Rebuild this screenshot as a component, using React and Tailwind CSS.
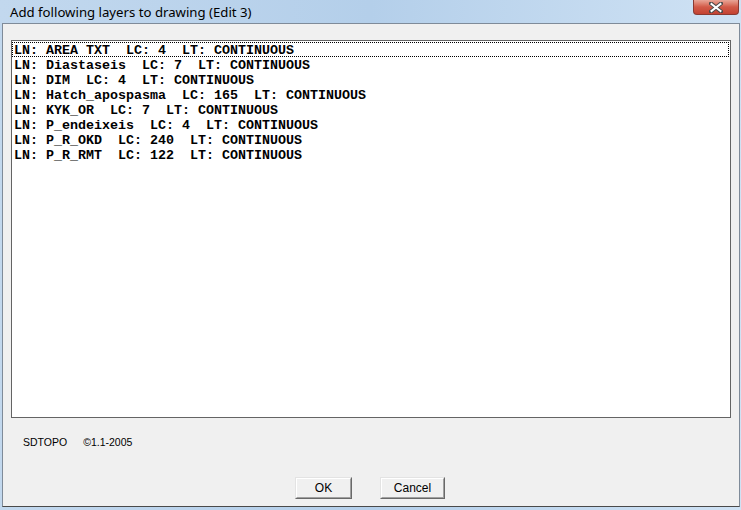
import React from "react";

const items = [
  "LN: AREA TXT  LC: 4  LT: CONTINUOUS",
  "LN: Diastaseis  LC: 7  LT: CONTINUOUS",
  "LN: DIM  LC: 4  LT: CONTINUOUS",
  "LN: Hatch_apospasma  LC: 165  LT: CONTINUOUS",
  "LN: KYK_OR  LC: 7  LT: CONTINUOUS",
  "LN: P_endeixeis  LC: 4  LT: CONTINUOUS",
  "LN: P_R_OKD  LC: 240  LT: CONTINUOUS",
  "LN: P_R_RMT  LC: 122  LT: CONTINUOUS",
];

function Btn({ children, w }) {
  return (
    <div className={`${w} h-[22px] border border-t-[#e3e3e3] border-l-[#e3e3e3] border-r-[#696969] border-b-[#696969] bg-[#f0f0f0] flex`}>
      <div className="flex-1 border border-t-white border-l-white border-r-[#a0a0a0] border-b-[#a0a0a0] flex items-center justify-center text-[12px] text-black" style={{ fontFamily: '"Liberation Sans", Arial, sans-serif' }}>
        {children}
      </div>
    </div>
  );
}

export default function App() {
  return (
    <div className="w-[741px] h-[510px] overflow-hidden flex flex-col bg-gradient-to-r from-[#c2d8ee] via-[#b4cfea] to-[#cfe2f4]">
      <div className="h-[23px] flex items-start justify-between shrink-0">
        <div className="pl-[10px] pt-[3px] text-[13.2px] leading-[18px] text-black" style={{ fontFamily: '"Noto Sans", "Open Sans", sans-serif' }}>
          Add following layers to drawing (Edit 3)
        </div>
        <div className="mr-[2px] w-[46px] h-[15px] rounded-b-[4px] border border-t-0 border-[#8a3a32] bg-gradient-to-b from-[#e8a597] via-[#d25a48] to-[#c34232] flex items-center justify-center">
          <svg width="14" height="11" viewBox="0 0 14 11">
            <path d="M2 1.5 L12 9.5 M12 1.5 L2 9.5" stroke="#4a4a4a" strokeWidth="4" strokeLinecap="square" />
            <path d="M2.5 2 L11.5 9 M11.5 2 L2.5 9" stroke="#ffffff" strokeWidth="2" strokeLinecap="square" />
          </svg>
        </div>
      </div>
      <div className="flex-1 flex px-[2px] pb-[3px] bg-transparent">
        <div className="flex-1 flex flex-col bg-[#f0f0f0] border border-[#7f8b99] border-b-[#4a4a4a]">
          <div className="mx-[8px] mt-[16px] h-[378px] w-[720px] bg-white border border-[#646464] pt-[1px] pl-0 pr-[1px]">
            {items.map((t, i) => (
              <div
                key={i}
                className={`h-[15px] leading-[15px] pl-[1px] text-[13.33px] font-bold text-black whitespace-pre border ${i === 0 ? "border-dotted border-black" : "border-transparent"}`}
                style={{ fontFamily: '"Liberation Mono", "DejaVu Sans Mono", monospace' }}
              >
                {t}
              </div>
            ))}
          </div>
          <div className="flex mt-[17px] pl-[20px] text-[10.5px] leading-[14px] text-black" style={{ fontFamily: '"Liberation Sans", Arial, sans-serif' }}>
            <span>SDTOPO</span>
            <span className="ml-[16px]">©1.1-2005</span>
          </div>
          <div className="flex mt-[28px] pl-[292px] gap-[28px]">
            <Btn w="w-[57px]">OK</Btn>
            <Btn w="w-[65px]">Cancel</Btn>
          </div>
        </div>
      </div>
    </div>
  );
}
